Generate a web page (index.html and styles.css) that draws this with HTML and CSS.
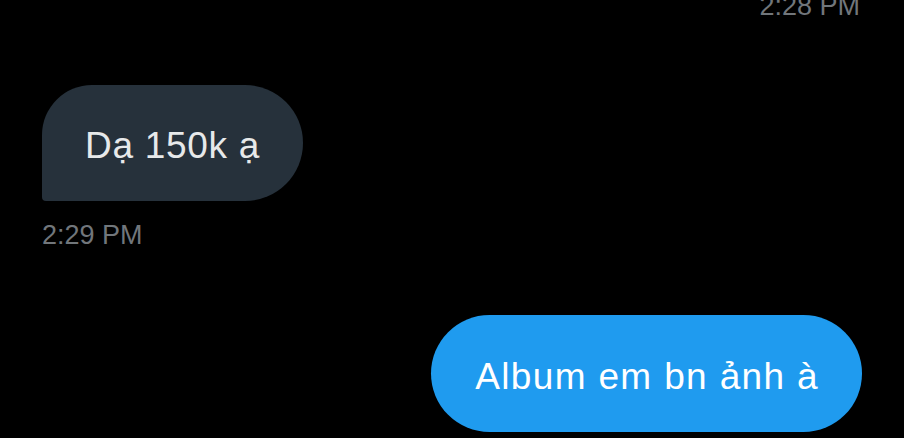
FILE: index.html
```html
<!DOCTYPE html>
<html lang="vi">
<head>
<meta charset="utf-8">
<title>Chat</title>
<link rel="stylesheet" href="styles.css">
</head>
<body>
<div class="chat">
  <div class="ts ts-right">2:28 PM</div>
  <div class="row row-left">
    <div class="bubble bubble-in">Dạ 150k ạ</div>
  </div>
  <div class="ts ts-left">2:29 PM</div>
  <div class="row row-right">
    <div class="bubble bubble-out">Album em bn ảnh à</div>
  </div>
</div>
</body>
</html>
```
FILE: styles.css
```css
html, body {
  margin: 0;
  padding: 0;
  background: #000;
  height: 100%;
  overflow: hidden;
}
.chat {
  display: flex;
  flex-direction: column;
  padding: 0 42px;
  margin-top: -10px;
  font-family: "Liberation Sans", Arial, sans-serif;
}
.ts {
  font-size: 27px;
  line-height: 32px;
  color: #71767b;
}
.ts-right {
  text-align: right;
  padding-right: 2px;
}
.ts-left {
  margin-top: 18px;
}
.row {
  display: flex;
}
.row-left {
  justify-content: flex-start;
  margin-top: 63px;
}
.row-right {
  justify-content: flex-end;
  margin-top: 64px;
}
.bubble {
  font-size: 37px;
  line-height: 40px;
  padding: 41px 43px 35px;
  white-space: nowrap;
}
.bubble-in {
  background: #26313b;
  color: #e7e9ea;
  border-radius: 50px 58px 58px 4px;
  letter-spacing: 0.7px;
}
.bubble-out {
  background: #1f9bef;
  color: #fff;
  border-radius: 59px;
  padding-top: 42px;
  padding-left: 44px;
  letter-spacing: 1.35px;
}
```
